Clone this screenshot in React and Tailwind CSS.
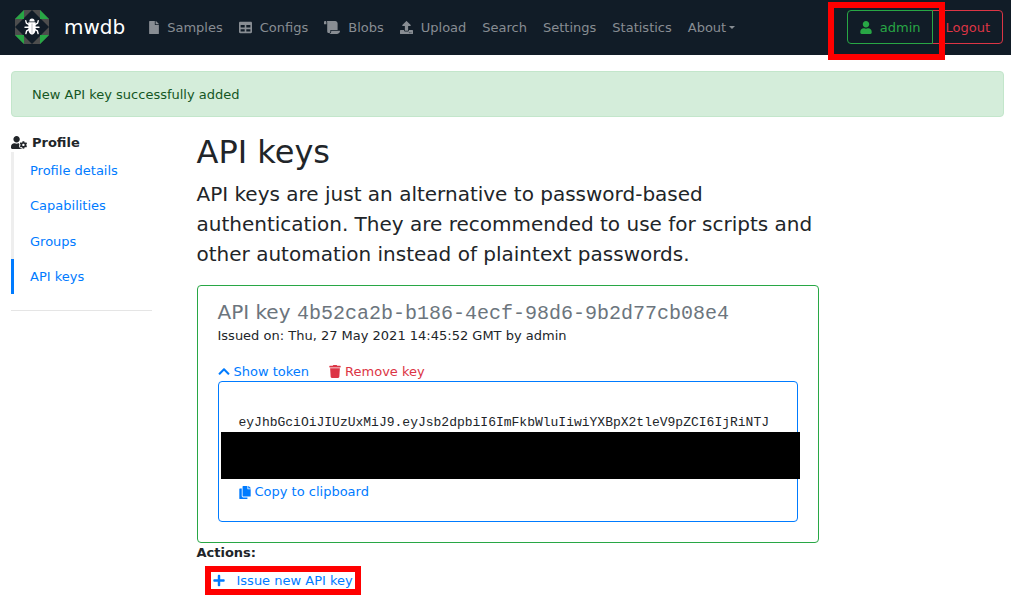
import React from "react";
import {
  FaChevronUp,
  FaCopy,
  FaFile,
  FaPlus,
  FaScroll,
  FaTable,
  FaTrash,
  FaUpload,
  FaUser,
  FaUserCog,
} from "react-icons/fa";

function Logo() {
  return (
    <svg viewBox="0 0 34 34" className="h-[34px] w-[34px]" aria-hidden="true">
      <path d="M9 0H25L34 9V25L25 34H9L0 25V9Z" fill="#4d4d4d" />
      <path d="M17 0L34 17L17 34L0 17Z" fill="#111c27" />
      <path d="M0 9L9 0V9ZM25 0L34 9H25ZM0 25H9V34ZM34 25L25 34V25Z" fill="#28a745" />
      <g fill="none" stroke="#fff" strokeWidth="1.4" strokeLinecap="round" strokeLinejoin="round">
        <path d="M14.8 15.2L11.4 13.2L10.8 10.8M19.2 15.2L22.6 13.2L23.2 10.8" />
        <path d="M14.6 17.2H10M19.4 17.2H24" />
        <path d="M14.8 19.2L11.6 20.8L10.9 23.6M19.2 19.2L22.4 20.8L23.1 23.6" />
      </g>
      <path d="M14.3 11.6C14.3 9.6 15.3 8.4 17 8.4S19.7 9.6 19.7 11.6Z" fill="#fff" />
      <path d="M13.4 12.2H20.6V18.6C20.6 22.2 19.3 24.6 17 24.6S13.4 22.2 13.4 18.6Z" fill="#fff" />
      <path d="M17 13.6V23.4" stroke="#b5b8bc" strokeWidth="0.9" />
    </svg>
  );
}

const navItems = [
  { label: "Samples", icon: FaFile, size: "w-[10px]" },
  { label: "Configs", icon: FaTable, size: "w-[13px]" },
  { label: "Blobs", icon: FaScroll, size: "w-[16px]" },
  { label: "Upload", icon: FaUpload, size: "w-[13px]" },
  { label: "Search" },
  { label: "Settings" },
  { label: "Statistics" },
];

function Navbar() {
  return (
    <header className="flex items-center bg-[#111c27] pb-[11px] pl-[15px] pr-2 pt-2.5">
      <a href="#home" className="flex items-center gap-[15px] text-xl leading-6 text-white">
        <Logo />
        mwdb
      </a>
      <nav className="ml-6 flex items-center gap-4 text-[#888d93]">
        {navItems.map(({ label, icon: Icon, size }) => (
          <a key={label} href={`#${label.toLowerCase()}`} className="flex items-center gap-2">
            {Icon && <Icon className={`h-[13px] ${size}`} />}
            {label}
          </a>
        ))}
        <button type="button" className="flex items-center gap-[3px]">
          About
          <svg viewBox="0 0 6 3" className="h-[3px] w-[6px]" fill="currentColor" aria-hidden="true">
            <path d="M0 0H6L3 3Z" />
          </svg>
        </button>
      </nav>
      <div className="ml-auto flex">
        <div className="relative">
          <a
            href="#profile"
            className="flex h-[34px] items-center gap-2 rounded-l border border-[#28a745] px-3 text-[#28a745]"
          >
            <FaUser className="h-[13px] w-3" />
            admin
          </a>
          <div className="pointer-events-none absolute -bottom-4 -left-[19px] -right-3 -top-2 z-10 border-6 border-[#ff0000]" />
        </div>
        <button
          type="button"
          className="-ml-px h-[34px] rounded-r border border-[#dc3545] px-3 text-[#dc3545]"
        >
          Logout
        </button>
      </div>
    </header>
  );
}

const sections = ["Profile details", "Capabilities", "Groups", "API keys"];

function Sidebar() {
  return (
    <aside>
      <div className="flex h-[19px] items-center gap-[5px] font-bold">
        <FaUserCog className="h-[13px] w-[16px]" />
        Profile
      </div>
      <nav className="grid h-[142px] grid-rows-4 text-[#007bff]">
        {sections.map((name) => (
          <a
            key={name}
            href={`#${name}`}
            className={`flex items-center border-l-3 pl-4 pt-px ${
              name === "API keys" ? "border-[#007bff]" : "border-[#eeeeee]"
            }`}
          >
            {name}
          </a>
        ))}
      </nav>
      <hr className="mt-4 border-black/10" />
    </aside>
  );
}

function KeyCard() {
  return (
    <article className="rounded border border-[#28a745] px-5 pb-5 pt-3.5">
      <h2 className="text-xl leading-6 text-[#6c757d]">
        API key{" "}
        <span className="font-['Liberation_Mono',monospace]">
          4b52ca2b-b186-4ecf-98d6-9b2d77cb08e4
        </span>
      </h2>
      <p className="leading-5">Issued on: Thu, 27 May 2021 14:45:52 GMT by admin</p>
      <div className="mt-4 flex gap-5 leading-[19px]">
        <button type="button" className="flex items-center gap-1 text-[#007bff]">
          <FaChevronUp className="h-[13px] w-3" />
          Show token
        </button>
        <button type="button" className="flex items-center gap-1 text-[#dc3545]">
          <FaTrash className="h-[13px] w-3" />
          Remove key
        </button>
      </div>
      <div className="relative rounded border border-[#007bff] px-5 pb-[19px] pt-[31px]">
        <pre className="h-[69px] font-['Liberation_Mono',monospace] leading-5">
          eyJhbGciOiJIUzUxMiJ9.eyJsb2dpbiI6ImFkbWluIiwiYXBpX2tleV9pZCI6IjRiNTJ
        </pre>
        <div className="absolute left-0.5 -right-[3px] top-[50px] h-[47px] bg-black" />
        <button type="button" className="flex items-center gap-1 leading-5 text-[#007bff]">
          <FaCopy className="h-[13px] w-3" />
          Copy to clipboard
        </button>
      </div>
    </article>
  );
}

export default function App() {
  return (
    <div className="font-['DejaVu_Sans',sans-serif] text-[13px] leading-[21px] text-[#212529]">
      <Navbar />
      <div className="pb-3 pl-[11px] pr-[7px] pt-4">
        <div
          role="alert"
          className="rounded border border-[#c3e6cb] bg-[#d4edda] px-5 pb-[11px] pt-3 text-[#155724]"
        >
          New API key successfully added
        </div>
        <div className="mt-4 grid grid-cols-[281fr_1244fr_281fr] gap-x-[45px]">
          <Sidebar />
          <main>
            <h1 className="text-[32px] leading-[38px]">API keys</h1>
            <p className="mt-2 text-xl leading-[30px]">
              API keys are just an alternative to password-based authentication. They are
              recommended to use for scripts and other automation instead of plaintext passwords.
            </p>
            <div className="mt-4">
              <KeyCard />
            </div>
            <div className="font-bold leading-5">Actions:</div>
            <div className="relative ml-4 mt-[7px] inline-flex">
              <button type="button" className="flex items-center gap-3 text-[#007bff]">
                <FaPlus className="h-[13px] w-3" />
                Issue new API key
              </button>
              <div className="pointer-events-none absolute -bottom-1 -left-2 -right-2 -top-1 border-6 border-[#ff0000]" />
            </div>
          </main>
        </div>
      </div>
    </div>
  );
}
